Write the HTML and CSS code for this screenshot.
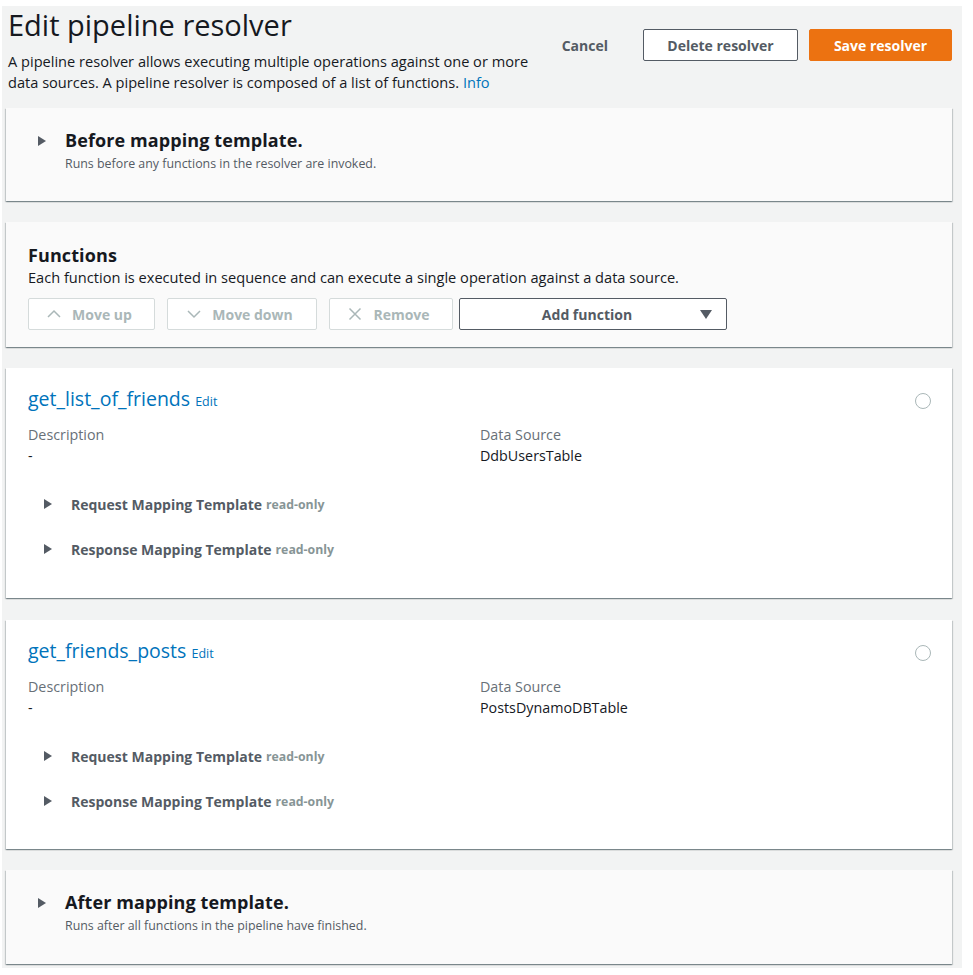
FILE: index.html
```html
<!DOCTYPE html>
<html>
<head>
<meta charset="utf-8">
<link rel="stylesheet" href="styles.css">
</head>
<body>
<div class="page">
  <header class="head">
    <div class="head-text">
      <h1 class="title">Edit pipeline resolver</h1>
      <p class="lead">A pipeline resolver allows executing multiple operations against one or more data sources. A pipeline resolver is composed of a list of functions. <a class="link">Info</a></p>
    </div>
    <div class="head-actions">
      <button class="btn btn-text">Cancel</button>
      <button class="btn btn-normal">Delete resolver</button>
      <button class="btn btn-primary">Save resolver</button>
    </div>
  </header>

  <section class="panel panel-grey template">
    <span class="caret caret-lg"></span>
    <div>
      <h2 class="panel-title">Before mapping template.</h2>
      <p class="panel-sub">Runs before any functions in the resolver are invoked.</p>
    </div>
  </section>

  <section class="panel panel-grey functions">
    <h2 class="panel-title">Functions</h2>
    <p class="fn-desc">Each function is executed in sequence and can execute a single operation against a data source.</p>
    <div class="toolbar">
      <button class="btn btn-disabled w-up">
        <svg class="ico" viewBox="0 0 16 16" width="16" height="16"><path d="M2 11 L8 5 L14 11" fill="none" stroke="currentColor" stroke-width="1.5"/></svg>
        Move up</button>
      <button class="btn btn-disabled w-down">
        <svg class="ico" viewBox="0 0 16 16" width="16" height="16"><path d="M2 5 L8 11 L14 5" fill="none" stroke="currentColor" stroke-width="1.5"/></svg>
        Move down</button>
      <button class="btn btn-disabled w-remove">
        <svg class="ico" viewBox="0 0 16 16" width="16" height="16"><path d="M2.5 2.5 L13.5 13.5 M13.5 2.5 L2.5 13.5" fill="none" stroke="currentColor" stroke-width="1.5"/></svg>
        Remove</button>
      <button class="btn btn-dropdown">
        <span class="dd-label">Add function</span>
        <svg class="dd-caret" viewBox="0 0 12 10" width="12" height="10"><path d="M0 0 H12 L6 9 Z" fill="currentColor"/></svg>
      </button>
    </div>
  </section>

  <section class="panel card card-first">
    <div class="card-head">
      <h3 class="fn-name"><a class="link">get_list_of_friends</a> <a class="link edit">Edit</a></h3>
      <span class="radio"></span>
    </div>
    <div class="kv">
      <div class="kv-col">
        <div class="kv-label">Description</div>
        <div class="kv-value">-</div>
      </div>
      <div class="kv-col">
        <div class="kv-label">Data Source</div>
        <div class="kv-value">DdbUsersTable</div>
      </div>
    </div>
    <div class="expander"><span class="caret"></span><span class="exp-title">Request Mapping Template</span> <span class="ro">read-only</span></div>
    <div class="expander"><span class="caret"></span><span class="exp-title">Response Mapping Template</span> <span class="ro">read-only</span></div>
  </section>

  <section class="panel card">
    <div class="card-head">
      <h3 class="fn-name"><a class="link">get_friends_posts</a> <a class="link edit">Edit</a></h3>
      <span class="radio"></span>
    </div>
    <div class="kv">
      <div class="kv-col">
        <div class="kv-label">Description</div>
        <div class="kv-value">-</div>
      </div>
      <div class="kv-col">
        <div class="kv-label">Data Source</div>
        <div class="kv-value">PostsDynamoDBTable</div>
      </div>
    </div>
    <div class="expander"><span class="caret"></span><span class="exp-title">Request Mapping Template</span> <span class="ro">read-only</span></div>
    <div class="expander"><span class="caret"></span><span class="exp-title">Response Mapping Template</span> <span class="ro">read-only</span></div>
  </section>

  <section class="panel panel-grey template template-last">
    <span class="caret caret-lg"></span>
    <div>
      <h2 class="panel-title">After mapping template.</h2>
      <p class="panel-sub">Runs after all functions in the pipeline have finished.</p>
    </div>
  </section>
</div>
</body>
</html>
```

FILE: styles.css
```css
* { box-sizing: border-box; }
html, body { margin: 0; padding: 0; background: #ffffff; }
body {
  font-family: "Open Sans", "Noto Sans", "Liberation Sans", sans-serif;
  color: #16191f;
  font-size: 14px;
}
.page {
  margin: 6px 11px 0 2px;
  background: #f2f3f3;
  padding: 0 10px 4px 4px;
  display: flex;
  flex-direction: column;
  gap: 21px;
  height: 962px;
}
.head {
  display: flex;
  justify-content: space-between;
  align-items: flex-start;
  height: 81px;
  flex-shrink: 0;
}
.head-text { padding-left: 2px; width: 532px; }
.title {
  margin: 0;
  font-weight: 400;
  font-size: 29px;
  line-height: 38px;
}
.lead {
  margin: 7px 0 0;
  font-size: 14.6px;
  line-height: 21px;
}
.link { color: #0073bb; text-decoration: none; }
.head-actions {
  display: flex;
  gap: 11px;
  align-items: center;
  margin-top: 23px;
}
.btn {
  font-family: inherit;
  font-size: 14px;
  font-weight: 700;
  height: 32px;
  border-radius: 2px;
  padding: 0 20px;
  cursor: pointer;
  display: inline-flex;
  align-items: center;
  justify-content: center;
}
.btn-text { background: transparent; border: 1px solid transparent; color: #545b64; margin-right: 3px; }
.btn-normal { background: #fff; border: 1px solid #545b64; color: #545b64; width: 155px; }
.btn-primary { background: #ec7211; border: 1px solid #ec7211; color: #fff; width: 143px; }

.panel {
  flex-shrink: 0;
  box-shadow: 0 1px 1px 0 rgba(0,28,36,.3), 1px 1px 1px 0 rgba(0,28,36,.15), -1px 1px 1px 0 rgba(0,28,36,.15);
}
.panel-grey { background: #fafafa; }
.template {
  display: flex;
  align-items: flex-start;
  padding: 20px 20px 0 32px;
  height: 93px;
}
.template-last { height: 94px; }
.template .caret-lg { margin-top: 8px; margin-right: 19px; }
.caret {
  display: inline-block;
  width: 0; height: 0;
  border-top: 5px solid transparent;
  border-bottom: 5px solid transparent;
  border-left: 8px solid #545b64;
}
.panel-title {
  margin: 0;
  font-size: 18px;
  font-weight: 700;
  line-height: 24px;
  letter-spacing: 0.1px;
}
.panel-sub {
  margin: 3px 0 0;
  font-size: 12.4px;
  line-height: 18px;
  color: #545b64;
}
.functions {
  padding: 21px 20px 0 22px;
  height: 125px;
}
.fn-desc { margin: 0; font-size: 14.6px; line-height: 20px; }
.toolbar {
  display: flex;
  gap: 12px;
  margin-top: 11px;
}
.toolbar .btn { padding: 0; }
.btn-disabled {
  background: #fff;
  border: 1px solid #d5dbdb;
  color: #aab7b8;
  gap: 10px;
  padding-right: 5px !important;
}
.ico { display: block; }
.w-up { width: 127px; }
.w-down { width: 150px; }
.w-remove { width: 124px; margin-right: -6px; }
.btn-dropdown {
  background: #fff;
  border: 1px solid #545b64;
  color: #545b64;
  width: 268px;
  position: relative;
  padding-right: 12px !important;
}
.dd-caret { position: absolute; right: 14px; top: 11px; }

.card {
  background: #ffffff;
  height: 229px;
  padding: 17px 20px 0 22px;
}
.card-first { height: 230px; margin-bottom: 1px; }
.card-head {
  display: flex;
  justify-content: space-between;
  align-items: center;
}
.fn-name {
  margin: 0;
  font-size: 19.5px;
  font-weight: 400;
  line-height: 28px;
}
.edit { font-size: 12.5px; }
.radio {
  width: 16px; height: 16px;
  border-radius: 50%;
  border: 1px solid #aab7b8;
  margin-right: 1px;
}
.kv { display: flex; margin-top: 8px; }
.kv-col { width: 452px; }
.kv-label { color: #687078; font-size: 14.3px; line-height: 21px; }
.kv-value { font-size: 14.3px; line-height: 21px; }
.expander {
  display: flex;
  align-items: center;
  padding-left: 16px;
  height: 22px;
  font-size: 14px;
  color: #545b64;
}
.kv + .expander { margin-top: 27px; }
.expander + .expander { margin-top: 23px; }
.expander .caret { margin-right: 19px; }
.exp-title { font-weight: 700; }
.ro { color: #879596; font-size: 12.3px; font-weight: 700; margin-left: 4px; }
```
